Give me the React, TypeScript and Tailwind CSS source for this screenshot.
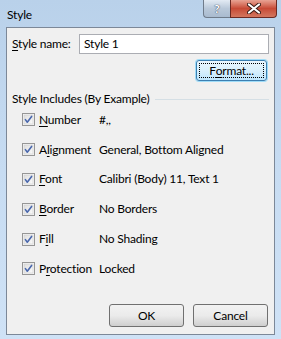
import React from "react";

const font = { fontFamily: 'Lato, "Noto Sans", sans-serif' };

function Check() {
  return (
    <svg width="13" height="13" viewBox="0 0 13 13" className="shrink-0">
      <defs>
        <linearGradient id="cbg" x1="0" y1="0" x2="1" y2="1">
          <stop offset="0" stopColor="#dedede" />
          <stop offset="1" stopColor="#fbfbfb" />
        </linearGradient>
      </defs>
      <rect x="0.5" y="0.5" width="12" height="12" fill="#f6f6f6" stroke="#969696" />
      <rect x="2" y="2" width="9" height="9" fill="url(#cbg)" stroke="#cccccc" strokeWidth="0.6" />
      <path d="M3.4 6.6 L5.3 9.2 L9.6 3.4" fill="none" stroke="#4a68ad" strokeWidth="1.6" strokeLinejoin="round" strokeLinecap="round" />
    </svg>
  );
}

function Row({ label, u, value }: { label: string; u: number; value: string }) {
  return (
    <div className="flex items-center h-[29.8px]">
      <Check />
      <div className="w-[64px] pl-[4px] whitespace-nowrap">
        {label.slice(0, u)}
        <span className="underline underline-offset-2">{label[u]}</span>
        {label.slice(u + 1)}
      </div>
      <div className="whitespace-nowrap">{value}</div>
    </div>
  );
}

export default function App() {
  return (
    <div
      className="w-[281px] h-[339px] flex flex-col text-[12px] leading-[16px] tracking-[-0.2px] text-black bg-gradient-to-b from-[#b9d1ea] via-[#c7dcf2] to-[#cfe2f6]"
      style={font}
    >
      <div className="h-[27px] flex items-start justify-between pl-[7px] pr-[4px]">
        <div className="pt-[7px] text-[12px]">Style</div>
        <div className="flex">
          <div className="w-[27px] h-[18px] rounded-bl-[4px] border border-[#6f7b8a] border-t-0 border-r-0 bg-gradient-to-b from-[#e3ebf4] via-[#b9c8d9] to-[#a9bbcf] flex items-center justify-center text-white font-bold text-[12px] [text-shadow:0_0_1px_#34425a,0_0_1px_#34425a]">
            ?
          </div>
          <div className="w-[47px] h-[18px] rounded-br-[4px] border border-[#6c2a23] border-t-0 bg-gradient-to-b from-[#e8a394] via-[#c74a36] to-[#d3765f] flex items-center justify-center">
            <svg width="14" height="11" viewBox="0 0 14 11">
              <path d="M2 1.5 L12 9.5 M12 1.5 L2 9.5" stroke="#3a1a14" strokeWidth="4" strokeLinecap="round" />
              <path d="M2 1.5 L12 9.5 M12 1.5 L2 9.5" stroke="#ffffff" strokeWidth="2.2" strokeLinecap="round" />
            </svg>
          </div>
        </div>
      </div>
      <div className="mx-[6px] mb-[4px] flex-1 border border-[#7c8898] bg-[#f0f0f0] flex flex-col px-[5px]">
        <div className="flex items-center mt-[6px] h-[20px]">
          <div className="w-[67px] whitespace-nowrap">
            <span className="underline underline-offset-2">S</span>tyle name:
          </div>
          <div className="flex-1 h-[20px] border border-[#abadb3] bg-white pl-[4px] flex items-center">Style 1</div>
        </div>
        <div className="flex justify-end mt-[6px] pr-[2px]">
          <div className="w-[71px] h-[21px] rounded-[3px] border border-[#3c7fb1] shadow-[0_0_0_1px_#9fdcf8] bg-gradient-to-b from-[#eaf6fd] via-[#d9f0fc] to-[#bee6fd] flex items-center justify-center p-[2px]">
            <div className="w-full h-full border border-dotted border-black flex items-center justify-center">
              F<span className="underline underline-offset-2">o</span>rmat...
            </div>
          </div>
        </div>
        <div className="flex items-center mt-[10px] h-[16px]">
          <div className="whitespace-nowrap pr-[6px]">Style Includes (By Example)</div>
          <div className="flex-1 h-px bg-[#d5dfe5]"></div>
        </div>
        <div className="flex flex-col pl-[10px] mt-[-2px]">
          <Row label="Number" u={0} value="#,," />
          <Row label="Alignment" u={1} value="General, Bottom Aligned" />
          <Row label="Font" u={0} value="Calibri (Body) 11, Text 1" />
          <Row label="Border" u={0} value="No Borders" />
          <Row label="Fill" u={1} value="No Shading" />
          <Row label="Protection" u={1} value="Locked" />
        </div>
        <div className="flex-1"></div>
        <div className="flex justify-end gap-[9px] mb-[7px] pr-[1px]">
          <div className="w-[75px] h-[23px] rounded-[3px] border border-[#707070] bg-gradient-to-b from-[#f2f2f2] via-[#ebebeb] to-[#cfcfcf] flex items-center justify-center">OK</div>
          <div className="w-[75px] h-[23px] rounded-[3px] border border-[#707070] bg-gradient-to-b from-[#f2f2f2] via-[#ebebeb] to-[#cfcfcf] flex items-center justify-center">Cancel</div>
        </div>
      </div>
    </div>
  );
}
